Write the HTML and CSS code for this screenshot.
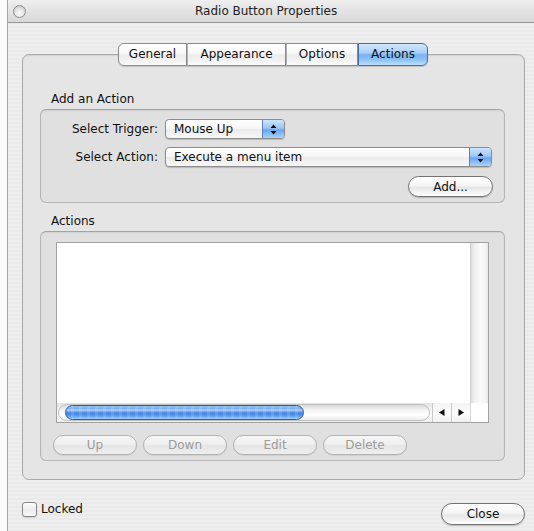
FILE: index.html
```html
<!DOCTYPE html>
<html lang="en">
<head>
<meta charset="utf-8">
<title>Radio Button Properties</title>
<link rel="stylesheet" href="styles.css">
</head>
<body>
<div class="window">
  <div class="titlebar">
    <span class="close-dot"></span>
    <span class="title">Radio Button Properties</span>
  </div>
  <div class="content">
    <div class="tabbox">
      <div class="tabs">
        <span class="tab tab-general">General</span>
        <span class="tab tab-appearance">Appearance</span>
        <span class="tab tab-options">Options</span>
        <span class="tab tab-actions selected">Actions</span>
      </div>

      <div class="group-label label-add">Add an Action</div>
      <div class="group group-add">
        <div class="field-row">
          <span class="field-label">Select Trigger:</span>
          <div class="popup popup-trigger">
            <span class="popup-text">Mouse Up</span>
            <span class="popup-arrows">
              <svg width="7" height="11" viewBox="0 0 7 11"><path d="M3.5 0.5 L6.5 4 L0.5 4 Z M0.5 7 L6.5 7 L3.5 10.5 Z" fill="#111"/></svg>
            </span>
          </div>
        </div>
        <div class="field-row">
          <span class="field-label">Select Action:</span>
          <div class="popup popup-action">
            <span class="popup-text">Execute a menu item</span>
            <span class="popup-arrows">
              <svg width="7" height="11" viewBox="0 0 7 11"><path d="M3.5 0.5 L6.5 4 L0.5 4 Z M0.5 7 L6.5 7 L3.5 10.5 Z" fill="#111"/></svg>
            </span>
          </div>
        </div>
        <div class="add-row">
          <button class="push btn-add">Add...</button>
        </div>
      </div>

      <div class="group-label label-actions">Actions</div>
      <div class="group group-actions">
        <div class="list">
          <div class="list-main">
            <div class="list-body"></div>
            <div class="vscroll"></div>
          </div>
          <div class="hscroll-row">
            <div class="hscroll">
              <div class="track"><div class="thumb"></div></div>
              <div class="hs-arrows">
                <span class="hs-arrow">
                  <svg width="6" height="7" viewBox="0 0 6 7"><path d="M5.5 0 L5.5 7 L0 3.5 Z" fill="#111"/></svg>
                </span>
                <span class="hs-arrow">
                  <svg width="6" height="7" viewBox="0 0 6 7"><path d="M0.5 0 L6 3.5 L0.5 7 Z" fill="#111"/></svg>
                </span>
              </div>
            </div>
            <div class="corner"></div>
          </div>
        </div>
        <div class="list-buttons">
          <button class="push disabled" disabled>Up</button>
          <button class="push disabled" disabled>Down</button>
          <button class="push disabled" disabled>Edit</button>
          <button class="push disabled" disabled>Delete</button>
        </div>
      </div>
    </div>

    <div class="footer">
      <label class="check">
        <span class="check-box"></span>
        <span class="check-text">Locked</span>
      </label>
      <button class="push btn-close">Close</button>
    </div>
  </div>
</div>
</body>
</html>
```

FILE: styles.css
```css
html, body {
  margin: 0;
  padding: 0;
  overflow: hidden;
  background: #fbfbfb;
}

body {
  font-family: "DejaVu Sans", "Liberation Sans", sans-serif;
  font-size: 12px;
  color: #111111;
}

/* window frame (continues past the right edge of the view) */
.window {
  margin-left: 7px;
  width: 527px;
  height: 531px;
  border-left: 1px solid #a4a4a4;
  box-sizing: border-box;
  background: repeating-linear-gradient(to bottom, #eeeeee 0, #eeeeee 2px, #eaeaea 2px, #eaeaea 4px);
}

.titlebar {
  height: 22px;
  display: flex;
  align-items: center;
  border-bottom: 1px solid #979797;
  background: linear-gradient(#efefef, #e3e3e3 50%, #d9d9d9);
}

.close-dot {
  width: 11px;
  height: 11px;
  margin-left: 5px;
  border-radius: 50%;
  border: 1px solid #8e8e8e;
  background: radial-gradient(circle at 50% 65%, #fdfdfd 0, #e6e6e6 45%, #b9b9b9 100%);
}

.title {
  margin-left: 169px;
  color: #222222;
}

.content {
  padding: 31px 0 0 14px;
  width: 503px;
}

/* tab view */
.tabbox {
  box-sizing: border-box;
  width: 503px;
  border: 1px solid #a9a9a9;
  border-radius: 7px;
  background: #e5e5e5;
  padding: 0 0 18px 0;
  box-shadow: inset 0 1px 1px rgba(0, 0, 0, 0.08);
}

.tabs {
  display: flex;
  justify-content: center;
  margin-top: -12px;
  height: 23px;
  padding-right: 1px;
}

.tab {
  box-sizing: border-box;
  height: 23px;
  line-height: 21px;
  text-align: center;
  border: 1px solid #8d8d8d;
  border-left: 1px solid #b2b2b2;
  background: linear-gradient(#ffffff, #f7f7f7 45%, #ececec 52%, #f4f4f4 85%, #fbfbfb);
  box-shadow: 0 1px 1px rgba(0, 0, 0, 0.15);
}

.tab-general {
  width: 69px;
  border-left: 1px solid #8d8d8d;
  border-radius: 6px 0 0 6px;
}
.tab-appearance { width: 99px; }
.tab-options { width: 72px; }
.tab-actions {
  width: 70px;
  border-radius: 0 6px 6px 0;
}

.tab.selected {
  border-color: #4a6aa2;
  background: linear-gradient(#d2e8fd, #a8cff8 42%, #78b2f0 52%, #8dc2f5 75%, #bde0fd);
}

/* group boxes */
.group-label {
  line-height: 15px;
  padding-left: 28px;
}
.label-add { margin-top: 26px; }
.label-actions { margin-top: 11px; }

.group {
  box-sizing: border-box;
  margin: 2px 0 0 17px;
  width: 465px;
  border: 1px solid #b6b6b6;
  border-top-color: #a3a3a3;
  border-radius: 6px;
  background: #e0e0e0;
  box-shadow: inset 0 1px 2px rgba(0, 0, 0, 0.07);
}

.group-add {
  padding: 9px 11px 5px 0;
  display: flex;
  flex-direction: column;
  gap: 8px;
}

.field-row {
  display: flex;
  align-items: center;
  height: 20px;
}

.field-label {
  width: 117px;
  text-align: right;
  margin-right: 7px;
}

/* popup menus */
.popup {
  box-sizing: border-box;
  height: 20px;
  display: flex;
  align-items: stretch;
  border: 1px solid #8c8c8c;
  border-radius: 4px;
  background: linear-gradient(#ffffff, #f6f6f6 48%, #ebebeb 52%, #f7f7f7);
  box-shadow: 0 1px 1px rgba(0, 0, 0, 0.18);
  overflow: hidden;
}
.popup-trigger { width: 120px; }
.popup-action { width: 327px; }

.popup-text {
  padding-left: 8px;
  line-height: 18px;
}

.popup-arrows {
  margin-left: auto;
  width: 21px;
  display: flex;
  align-items: center;
  justify-content: center;
  border-left: 1px solid #5d80bd;
  background: linear-gradient(#cce4fd, #9dc8f6 45%, #69a6ee 55%, #a8d3fb);
}

.add-row {
  display: flex;
  justify-content: flex-end;
  margin-top: 1px;
}

/* push buttons */
.push {
  box-sizing: border-box;
  font-family: "DejaVu Sans", "Liberation Sans", sans-serif;
  font-size: 12px;
  color: #111111;
  height: 21px;
  padding: 0;
  border: 1px solid #727272;
  border-radius: 11px;
  background: linear-gradient(#ffffff, #f5f5f5 45%, #e7e7e7 55%, #f6f6f6 85%, #ffffff);
  box-shadow: 0 1px 1px rgba(0, 0, 0, 0.2);
}

.btn-add { width: 85px; }

.push.disabled {
  height: 20px;
  width: 84px;
  color: #9c9c9c;
  border-color: #b3b3b3;
  background: linear-gradient(#f6f6f6, #efefef 45%, #e6e6e6 55%, #eeeeee);
  box-shadow: 0 1px 1px rgba(0, 0, 0, 0.08);
}

/* actions list */
.group-actions {
  padding: 10px 15px 2px 15px;
}

.list {
  box-sizing: border-box;
  height: 181px;
  border: 1px solid #a2a2a2;
  background: #ffffff;
  display: flex;
  flex-direction: column;
}

.list-main {
  display: flex;
  height: 160px;
}

.list-body {
  flex: 1;
  background: #ffffff;
}

.vscroll {
  width: 17px;
  border-left: 1px solid #cfcfcf;
  background: linear-gradient(to right, #dedede, #efefef 20%, #fafafa 55%, #f3f3f3 85%, #e5e5e5);
}

.hscroll-row {
  display: flex;
  height: 19px;
}

.hscroll {
  width: 413px;
  display: flex;
  align-items: center;
  background: linear-gradient(#e4e4e4, #f6f6f6 45%, #fbfbfb 70%, #eeeeee);
}

.track {
  box-sizing: border-box;
  flex: 1;
  height: 17px;
  margin-left: 1px;
  display: flex;
  align-items: center;
  border: 1px solid #c1c1c1;
  border-radius: 9px;
  background: linear-gradient(#d9d9d9, #f4f4f4 35%, #ffffff 65%, #ececec);
}

.thumb {
  box-sizing: border-box;
  width: 239px;
  height: 15px;
  margin-left: 6px;
  border: 1px solid #2f5aa8;
  border-radius: 8px;
  background:
    linear-gradient(rgba(255, 255, 255, 0) 0, rgba(255, 255, 255, 0) 20%, rgba(255, 255, 255, 0.45) 30%, rgba(255, 255, 255, 0.1) 45%, rgba(255, 255, 255, 0) 55%),
    repeating-linear-gradient(to right, rgba(255, 255, 255, 0) 0, rgba(255, 255, 255, 0) 5px, rgba(255, 255, 255, 0.12) 5px, rgba(255, 255, 255, 0.12) 8px),
    linear-gradient(#8fbcf2, #6aa5ee 35%, #3f83e2 55%, #62a2ef 80%, #a4d0fb);
}

.hs-arrows {
  display: flex;
  height: 19px;
  margin-left: 2px;
}

.hs-arrow {
  width: 18px;
  display: flex;
  align-items: center;
  justify-content: center;
  border-left: 1px solid #c9c9c9;
  background: linear-gradient(#f2f2f2, #fdfdfd 50%, #f0f0f0);
}

.corner {
  flex: 1;
  border-left: 1px solid #d6d6d6;
  background: #ffffff;
}

.list-buttons {
  display: flex;
  gap: 6px;
  margin: 12px 0 0 -3px;
  height: 23px;
}

/* bottom bar */
.footer {
  display: flex;
  justify-content: space-between;
  align-items: flex-start;
  padding-top: 22px;
}

.check {
  display: flex;
  align-items: center;
  gap: 4px;
}

.check-box {
  box-sizing: border-box;
  width: 15px;
  height: 15px;
  border: 1px solid #858585;
  border-radius: 3px;
  background: linear-gradient(#fdfdfd, #ececec 55%, #f7f7f7);
  box-shadow: 0 1px 1px rgba(0, 0, 0, 0.15);
}

.check-text {
  line-height: 15px;
}

.btn-close {
  width: 84px;
  height: 22px;
  margin-top: 1px;
}
```
